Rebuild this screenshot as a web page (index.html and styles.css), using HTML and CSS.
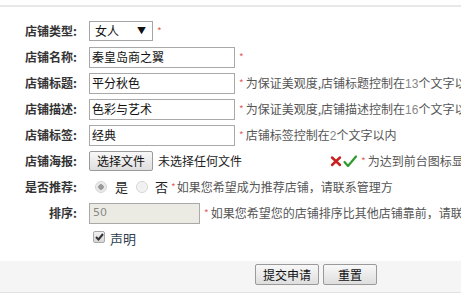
FILE: index.html
```html
<!DOCTYPE html>
<html lang="zh">
<head>
<meta charset="utf-8">
<link rel="stylesheet" href="styles.css">
</head>
<body>
<div class="page">
  <div class="topbar"></div>
  <div class="form">
    <div class="label">店铺类型:</div>
    <div class="field">
      <div class="select"><span>女人</span><span class="arrow">▼</span></div>
      <span class="req">*</span>
    </div>

    <div class="label">店铺名称:</div>
    <div class="field"><div class="input">秦皇岛商之翼</div><span class="req">*</span></div>

    <div class="label">店铺标题:</div>
    <div class="field"><div class="input">平分秋色</div><span class="req">*</span><span class="hint">为保证美观度,店铺标题控制在<span class="num">13</span>个文字以内</span></div>

    <div class="label">店铺描述:</div>
    <div class="field"><div class="input">色彩与艺术</div><span class="req">*</span><span class="hint">为保证美观度,店铺描述控制在<span class="num">16</span>个文字以内</span></div>

    <div class="label">店铺标签:</div>
    <div class="field"><div class="input">经典</div><span class="req">*</span><span class="hint">店铺标签控制在<span class="num">2</span>个文字以内</span></div>

    <div class="label">店铺海报:</div>
    <div class="field">
      <span class="btn file-btn">选择文件</span>
      <span class="filename">未选择任何文件</span>
      <span class="icons">
        <svg class="ico" width="12" height="12" viewBox="0 0 12 12"><path d="M2 2.5 L10 10 M10 2.5 L2 10" stroke="#c8201e" stroke-width="2.4" stroke-linecap="round" fill="none"/></svg>
        <svg class="ico" width="14" height="13" viewBox="0 0 14 13"><path d="M1.5 7 L5 11 L13 1.5" stroke="#2f9a2f" stroke-width="2.2" stroke-linejoin="round" stroke-linecap="round" fill="none"/></svg>
      </span>
      <span class="req">*</span><span class="hint">为达到前台图标显示效果</span>
    </div>

    <div class="label">是否推荐:</div>
    <div class="field">
      <span class="radio checked"></span><span class="opt">是</span>
      <span class="radio"></span><span class="opt">否</span>
      <span class="req tight">*</span><span class="hint">如果您希望成为推荐店铺，请联系管理方</span>
    </div>

    <div class="label">排序:</div>
    <div class="field"><div class="input small disabled">50</div><span class="req">*</span><span class="hint">如果您希望您的店铺排序比其他店铺靠前，请联系管理员</span></div>

    <div class="label"></div>
    <div class="field check-row"><span class="checkbox"><svg width="9" height="8" viewBox="0 0 9 8"><path d="M1 4 L3.5 6.5 L8 1" stroke="#333" stroke-width="2" fill="none"/></svg></span><span class="decl">声明</span></div>
  </div>
  <div class="footer">
    <span class="btn submit">提交申请</span>
    <span class="btn reset">重置</span>
  </div>
</div>
</body>
</html>
```
FILE: styles.css
```css
html, body {
  margin: 0;
  padding: 0;
  overflow: hidden;
  background: #fff;
}
body {
  font-family: "Noto Sans CJK SC", "Liberation Sans", sans-serif;
  font-size: 12px;
  color: #333;
}
.page {
  width: 632px;
}
.topbar {
  height: 5px;
  border-bottom: 2px solid #e8e8e8;
}
.form {
  display: grid;
  grid-template-columns: 77px 1fr;
  column-gap: 12px;
  grid-auto-rows: 26px;
  margin-top: 11px;
}
.label {
  font-weight: bold;
  text-align: right;
  color: #333;
  align-self: center;
  line-height: 14px;
}
.field {
  display: flex;
  align-items: center;
  white-space: nowrap;
  line-height: 14px;
}
.select {
  box-sizing: border-box;
  width: 64px;
  height: 20px;
  border: 1px solid #a5a5a5;
  display: flex;
  align-items: center;
  justify-content: space-between;
  padding: 0 6px 0 5px;
  color: #111;
  font-size: 12px;
}
.arrow {
  font-size: 9px;
  color: #111;
}
.input {
  box-sizing: border-box;
  width: 146px;
  height: 21px;
  border: 1px solid #a9a9a9;
  padding: 0 2px;
  display: flex;
  align-items: center;
  color: #111;
}
.input.small {
  width: 111px;
}
.input.disabled {
  background: #ebebe4;
  color: #8a8a8a;
  font-family: "DejaVu Sans", sans-serif;
  font-size: 11px;
  padding-left: 3px;
}
.req {
  color: #e0645f;
  font-size: 10px;
  margin-left: 4px;
  margin-right: 2px;
}
.req.tight {
  margin-left: 3px;
  margin-right: 1px;
}
.hint {
  color: #555;
}
.num {
  color: #888;
  font-family: "Liberation Sans", sans-serif;
}
.btn {
  box-sizing: border-box;
  display: inline-flex;
  align-items: center;
  justify-content: center;
  border: 1px solid #9a9a9a;
  border-radius: 2px;
  background: linear-gradient(#f8f8f8, #dedede);
  color: #111;
  font-size: 12px;
}
.file-btn {
  width: 64px;
  height: 20px;
}
.filename {
  margin-left: 5px;
  width: 236px;
  color: #222;
}
.icons {
  display: flex;
  align-items: center;
  gap: 1px;
  margin-left: -64px;
}
.ico {
  display: block;
}
.radio {
  box-sizing: border-box;
  width: 12px;
  height: 12px;
  border-radius: 50%;
  border: 1px solid #d4d4d4;
  background: radial-gradient(circle, #eee 0, #f6f6f6 100%);
  margin-left: 6px;
}
.radio.checked {
  background: radial-gradient(circle, #9a9a9a 0, #9a9a9a 2.5px, #e6e6e6 3px, #f4f4f4 100%);
}
.radio + .opt {
  margin-left: 8px;
  color: #222;
  font-size: 13px;
}
.opt + .radio {
  margin-left: 8px;
}
.opt + .radio + .opt {
  margin-left: 7px;
}
.checkbox {
  box-sizing: border-box;
  width: 12px;
  height: 12px;
  border: 1px solid #aaa;
  border-radius: 2px;
  background: linear-gradient(#f2f2f2, #d6d6d6);
  margin-left: 4px;
  margin-top: -4px;
  display: flex;
  align-items: center;
  justify-content: center;
}
.decl {
  margin-left: 5px;
  font-size: 13px;
  color: #2f3f4f;
}
.footer {
  margin-top: 9px;
  height: 28px;
  background: #f5f5f5;
  border-bottom: 1px solid #e2e2e2;
  display: flex;
  justify-content: center;
  align-items: flex-start;
  gap: 4px;
  padding-top: 3px;
}
.submit {
  width: 64px;
  height: 21px;
}
.reset {
  width: 54px;
  height: 21px;
}
```
